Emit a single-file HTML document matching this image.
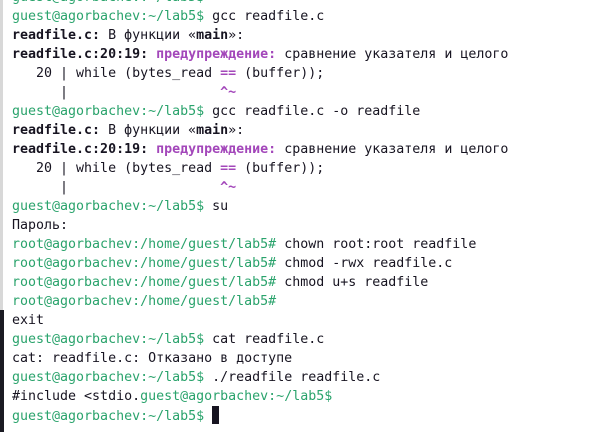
<!DOCTYPE html>
<html><head><meta charset="utf-8"><style>
html,body{margin:0;padding:0;width:601px;height:432px;overflow:hidden;background:#fff;}
.edge{position:absolute;left:0;top:0;width:3px;height:310px;background:#d8d8d8;}
.edge2{position:absolute;left:0;top:310px;width:4px;height:122px;background:#1a1a22;}
.t{position:absolute;left:12px;top:-12px;font-family:"DejaVu Sans Mono","Liberation Mono",monospace;font-size:13.3px;line-height:19px;color:#171421;white-space:pre;}
.g{color:#2aa36c}.p{color:#a347ba;font-weight:bold}.b{font-weight:bold}.pp{color:#a347ba}
.cur{display:inline-block;width:7px;height:18px;background:#171421;vertical-align:-4px;}
</style></head><body>
<div class="edge"></div><div class="edge2"></div>
<div class="t"><span class="g">guest@agorbachev:~/lab5$</span>
<span class="g">guest@agorbachev:~/lab5$</span> gcc readfile.c
<span class="b">readfile.c:</span> В функции «<span class="b">main</span>»:
<span class="b">readfile.c:20:19:</span> <span class="p">предупреждение:</span> сравнение указателя и целого
   20 | while (bytes_read <span class="p">==</span> (buffer));
      |                   <span class="p">^~</span>
<span class="g">guest@agorbachev:~/lab5$</span> gcc readfile.c -o readfile
<span class="b">readfile.c:</span> В функции «<span class="b">main</span>»:
<span class="b">readfile.c:20:19:</span> <span class="p">предупреждение:</span> сравнение указателя и целого
   20 | while (bytes_read <span class="p">==</span> (buffer));
      |                   <span class="p">^~</span>
<span class="g">guest@agorbachev:~/lab5$</span> su
Пароль:
<span class="g">root@agorbachev:/home/guest/lab5#</span> chown root:root readfile
<span class="g">root@agorbachev:/home/guest/lab5#</span> chmod -rwx readfile.c
<span class="g">root@agorbachev:/home/guest/lab5#</span> chmod u+s readfile
<span class="g">root@agorbachev:/home/guest/lab5#</span>
exit
<span class="g">guest@agorbachev:~/lab5$</span> cat readfile.c
cat: readfile.c: Отказано в доступе
<span class="g">guest@agorbachev:~/lab5$</span> ./readfile readfile.c
#include &lt;stdio.<span class="g">guest@agorbachev:~/lab5$</span>
<span class="g">guest@agorbachev:~/lab5$</span> <span class="cur"></span></div>
</body></html>
